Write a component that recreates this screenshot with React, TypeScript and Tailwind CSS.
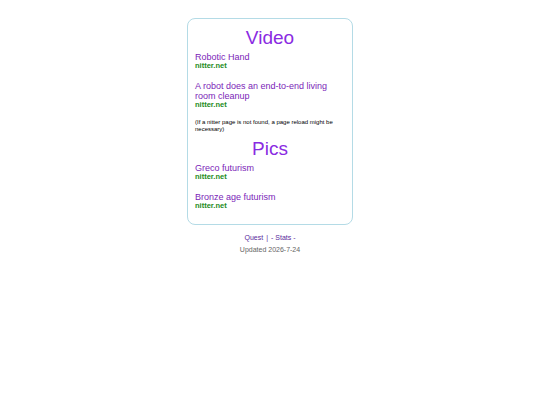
export default function App() {
  const video = [
    { title: "Robotic Hand", src: "nitter.net" },
    { title: "A robot does an end-to-end living room cleanup", src: "nitter.net" },
  ];
  const pics = [
    { title: "Greco futurism", src: "nitter.net" },
    { title: "Bronze age futurism", src: "nitter.net" },
  ];

  return (
    <div className="flex flex-col items-center pt-[18px] font-['Liberation_Sans',Arial,sans-serif]">
      <div className="w-[166px] rounded-lg border border-[#b4dbe6] px-[7px] pt-[7px] pb-[14px]">
        <h2 className="text-center text-[19px] leading-[24px] text-[#8a2be2]">Video</h2>
        <div className="mt-[2px]">
          {video.map((v) => (
            <div key={v.title} className="mb-[11px]">
              <a href="#" className="block text-[9px] leading-[10px] text-[#7b25b8]">
                {v.title}
              </a>
              <div className="text-[7.5px] font-bold leading-[8px] text-[#228b22]">{v.src}</div>
            </div>
          ))}
        </div>
        <p className="-mt-[1px] text-[6px] leading-[7px] text-black">
          (If a nitter page is not found, a page reload might be necessary)
        </p>
        <h2 className="mt-[4px] text-center text-[19px] leading-[24px] text-[#8a2be2]">Pics</h2>
        <div className="mt-[2px]">
          {pics.map((v, i) => (
            <div key={v.title} className={i === 0 ? "mb-[11px]" : ""}>
              <a href="#" className="block text-[9px] leading-[10px] text-[#7b25b8]">
                {v.title}
              </a>
              <div className="text-[7.5px] font-bold leading-[8px] text-[#228b22]">{v.src}</div>
            </div>
          ))}
        </div>
      </div>
      <div className="mt-[8px] text-[7px] leading-[10px] text-[#5a2a9c]">
        <a href="#">Quest</a>
        <span className="mx-[3px]">|</span>
        <a href="#">- Stats -</a>
      </div>
      <div className="mt-[2px] text-[7px] leading-[10px] text-[#666]">Updated 2026-7-24</div>
    </div>
  );
}
